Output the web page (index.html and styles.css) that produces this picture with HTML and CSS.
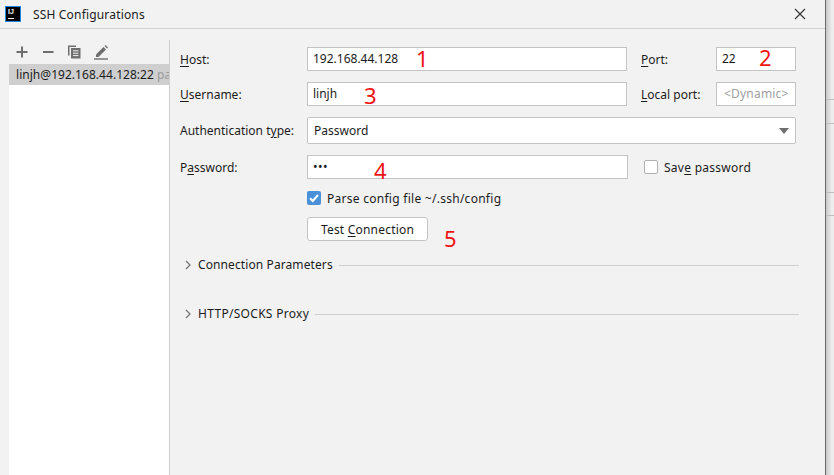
FILE: index.html
```html
<!DOCTYPE html>
<html lang="en">
<head>
<meta charset="utf-8">
<title>SSH Configurations</title>
<link rel="stylesheet" href="styles.css">
</head>
<body>
<div class="dialog">
  <header class="titlebar">
    <div class="logo"><span class="logo-text">IJ</span><span class="logo-bar"></span></div>
    <div class="title">SSH Configurations</div>
    <svg class="close" width="12" height="12" viewBox="0 0 12 12"><path d="M1 1l10 10M11 1L1 11" stroke="#333" stroke-width="1.1" fill="none"/></svg>
  </header>
  <div class="content">
    <aside class="side">
      <div class="toolbar">
        <svg class="tool" width="14" height="14" viewBox="0 0 14 14"><path d="M7 1.500v11M1.500 7h11" stroke="#6e6e6e" stroke-width="2" fill="none"/></svg>
        <svg class="tool" width="14" height="14" viewBox="0 0 14 14"><path d="M2 7h10.500" stroke="#6e6e6e" stroke-width="2" fill="none"/></svg>
        <svg class="tool" width="14" height="14" viewBox="0 0 14 14"><path d="M1 0.500H9v1.500H2.500V10.500H1z" fill="#6e6e6e"/><path d="M4 3H13.500V13.500H4z" fill="#6e6e6e"/><path d="M6 5.800h5.500M6 8.200h5.500M6 10.600h5.500" stroke="#f2f2f2" stroke-width="1" fill="none"/></svg>
        <svg class="tool" width="16" height="16" viewBox="0 0 16 16"><path d="M3 10.500L10.500 3l2.500 2.500L5.500 13H3z" fill="#6e6e6e"/><path d="M11.500 2l1-1 2.500 2.500-1 1z" fill="#6e6e6e"/><path d="M1 15h14" stroke="#6e6e6e" stroke-width="1.400" fill="none"/></svg>
      </div>
      <div class="list">
        <div class="list-item"><span class="item-name">linjh@192.168.44.128:22</span> <span class="item-type">password</span></div>
      </div>
    </aside>
    <main class="form">
      <div class="row row-host">
        <label class="label"><u>H</u>ost:</label>
        <div class="input input-main">192.168.44.128</div>
        <label class="label label-port"><u>P</u>ort:</label>
        <div class="input input-port">22</div>
      </div>
      <div class="row row-user">
        <label class="label"><u>U</u>sername:</label>
        <div class="input input-main">linjh</div>
        <label class="label label-port"><u>L</u>ocal port:</label>
        <div class="input input-port placeholder">&lt;Dynamic&gt;</div>
      </div>
      <div class="row row-auth">
        <label class="label">Authentication t<u>y</u>pe:</label>
        <div class="select">
          <span>Password</span>
          <svg width="10" height="6" viewBox="0 0 10 6"><path d="M0 0h10L5 6z" fill="#6e6e6e"/></svg>
        </div>
      </div>
      <div class="row row-pass">
        <label class="label">P<u>a</u>ssword:</label>
        <div class="input input-pass">•••</div>
        <span class="check empty"></span>
        <span class="check-label">Sav<u>e</u> password</span>
      </div>
      <div class="row row-parse">
        <span class="check checked">
          <svg width="14" height="14" viewBox="0 0 14 14"><path d="M3 7.200l2.800 2.800L11 4" stroke="#fff" stroke-width="2" fill="none"/></svg>
        </span>
        <span class="check-label">Parse config file ~/.ssh/config</span>
      </div>
      <button class="button">Test <u>C</u>onnection</button>
      <div class="section section-conn">
        <svg width="6" height="10" viewBox="0 0 6 10"><path d="M1 1l4 4-4 4" stroke="#777" stroke-width="1.300" fill="none"/></svg>
        <span class="section-name">Connection Parameters</span>
        <span class="section-line"></span>
      </div>
      <div class="section section-proxy">
        <svg width="6" height="10" viewBox="0 0 6 10"><path d="M1 1l4 4-4 4" stroke="#777" stroke-width="1.300" fill="none"/></svg>
        <span class="section-name">HTTP/SOCKS Proxy</span>
        <span class="section-line"></span>
      </div>
      <span class="mark mark-1">1</span>
      <span class="mark mark-2">2</span>
      <span class="mark mark-3">3</span>
      <span class="mark mark-4">4</span>
      <span class="mark mark-5">5</span>
    </main>
  </div>
</div>
<div class="behind">
  <div class="behind-line line-a"></div>
  <div class="behind-line line-b"></div>
  <div class="behind-line line-c"></div>
  <div class="behind-line line-d"></div>
</div>
</body>
</html>
```
FILE: styles.css
```css
html, body {
  margin: 0;
  padding: 0;
  width: 834px;
  height: 475px;
  overflow: hidden;
}
body {
  display: flex;
  font-family: "Noto Sans", "Open Sans", sans-serif;
  font-size: 12px;
  color: #1c1c1c;
  background: #f2f2f2;
}
u { text-underline-offset: 2px; }

.dialog {
  width: 825px;
  height: 475px;
  background: #f2f2f2;
  border-right: 1px solid #6b6b6b;
  display: flex;
  flex-direction: column;
  flex: none;
}
.titlebar {
  height: 28px;
  flex: none;
  border-bottom: 1px solid #d0d0d0;
  display: flex;
  align-items: center;
  padding-left: 5px;
  padding-right: 19px;
}
.logo {
  width: 16px;
  height: 16px;
  box-sizing: border-box;
  background: #000;
  border: 1px solid #1e88e5;
  display: flex;
  flex-direction: column;
  padding: 0 0 0 2px;
  flex: none;
}
.logo-text {
  color: #fff;
  font: bold 7px/9px "Liberation Sans", sans-serif;
}
.logo-bar {
  display: block;
  width: 6px;
  height: 1px;
  background: #fff;
  margin-top: 2px;
}
.title {
  margin-left: 12px;
  font-size: 12px;
  letter-spacing: 0.17px;
  flex: 1;
}
.close { flex: none; }

.content {
  flex: 1;
  display: flex;
  min-height: 0;
}
.side {
  width: 160px;
  padding-left: 9px;
  margin-top: 11px;
  border-right: 1px solid #cfcfcf;
  display: flex;
  flex-direction: column;
  flex: none;
}
.toolbar {
  height: 24px;
  flex: none;
  display: flex;
  align-items: center;
  gap: 12px;
  padding-left: 6px;
}
.list {
  flex: 1;
  background: #fff;
  overflow: hidden;
}
.list-item {
  height: 21px;
  line-height: 21px;
  background: #cfcfcf;
  padding-left: 7px;
  white-space: nowrap;
  overflow: hidden;
  letter-spacing: 0.04px;
}
.item-type { color: #9a9a9a; }

.form {
  flex: 1;
  position: relative;
  padding: 18px 29px 0 10px;
  min-width: 0;
}
.row {
  display: flex;
  align-items: center;
}
.row-host { height: 24px; }
.row-user { height: 24px; margin-top: 11px; }
.row-auth { height: 27px; margin-top: 11px; }
.row-pass { height: 24px; margin-top: 11px; }
.row-parse { height: 14px; margin-top: 12px; padding-left: 127px; }

.label {
  width: 127px;
  flex: none;
  white-space: nowrap;
}
.label-port {
  width: 75px;
  margin-left: 14px;
}
.input {
  height: 24px;
  box-sizing: border-box;
  background: #fff;
  border: 1px solid #c4c4c4;
  line-height: 22px;
  padding-left: 5px;
  flex: none;
  white-space: nowrap;
}
.input-main { width: 320px; }
.input-port { width: 80px; }
.input-pass { width: 321px; letter-spacing: 0.5px; }
.placeholder { color: #a0a0a0; padding-left: 7px; letter-spacing: 0.2px; }
.select {
  flex: 1;
  height: 27px;
  box-sizing: border-box;
  background: #fff;
  border: 1px solid #c4c4c4;
  border-radius: 2px;
  display: flex;
  align-items: center;
  justify-content: space-between;
  padding: 0 6px;
}
.check {
  width: 14px;
  height: 14px;
  box-sizing: border-box;
  border-radius: 2px;
  flex: none;
  display: block;
}
.check svg { display: block; }
.check.empty {
  background: #fff;
  border: 1px solid #b0b0b0;
  margin-left: 16px;
}
.check.checked { background: #4a90d9; }
.check-label { margin-left: 6px; white-space: nowrap; letter-spacing: 0.27px; }
.button {
  display: block;
  width: 121px;
  height: 24px;
  margin: 12px 0 0 127px;
  padding: 0;
  box-sizing: border-box;
  background: #fff;
  border: 1px solid #c4c4c4;
  border-radius: 3px;
  font: inherit;
  letter-spacing: 0.2px;
  color: inherit;
}
.section {
  display: flex;
  align-items: center;
  height: 16px;
  margin-right: -3px;
  padding-left: 5px;
}
.section-conn { margin-top: 16px; }
.section-proxy { margin-top: 33px; }
.section-name {
  margin-left: 7px;
  margin-bottom: 2px;
  white-space: nowrap;
}
.section-conn .section-name { letter-spacing: 0.1px; }
.section-proxy .section-name { letter-spacing: 0.3px; }
.section-line {
  flex: 1;
  height: 1px;
  background: #cfcfcf;
  margin-left: 6px;
}
.mark {
  position: absolute;
  color: #f01414;
  font-size: 22px;
  line-height: 24px;
}
.mark-1 { left: 246px; top: 17px; }
.mark-2 { left: 589px; top: 16px; }
.mark-3 { left: 194px; top: 54px; }
.mark-4 { left: 204px; top: 129px; }
.mark-5 { left: 274px; top: 197px; }

.behind {
  flex: 1;
  display: flex;
  flex-direction: column;
  background: linear-gradient(to right, #c8c8c8, #ececec 70%, #efefef);
}
.behind-line {
  height: 1px;
  background: #bdbdbd;
  flex: none;
}
.line-a { margin-top: 99px; }
.line-b { margin-top: 23px; }
.line-c { margin-top: 68px; }
.line-d { margin-top: 22px; }
```
